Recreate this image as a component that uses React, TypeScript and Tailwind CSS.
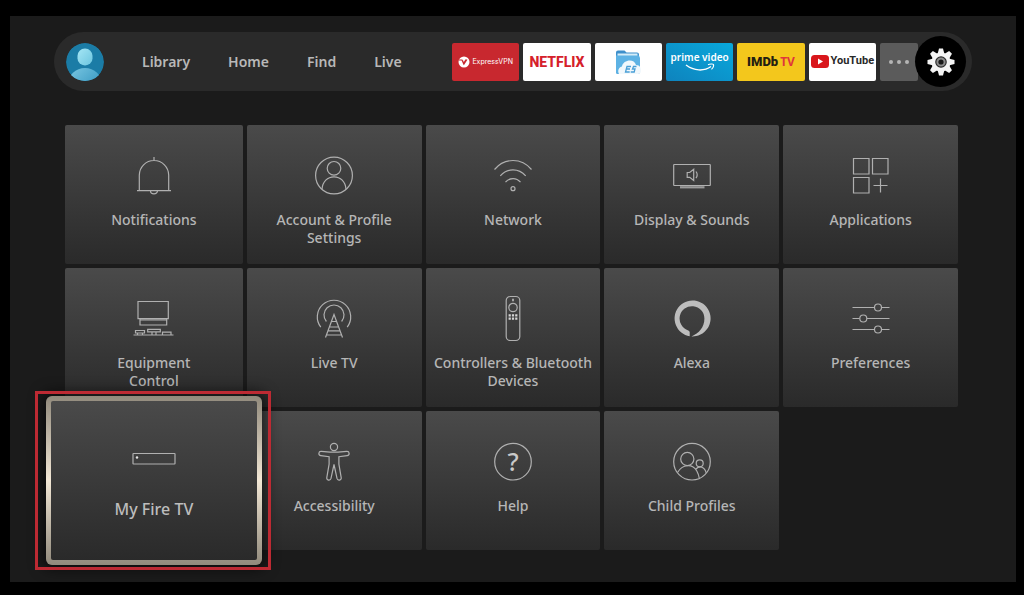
import type { ReactNode } from "react";

type Tile = { label: string; icon: ReactNode; focused?: boolean };

function Icon({ children }: { children: ReactNode }) {
  return (
    <svg
      aria-hidden="true"
      viewBox="0 0 48 48"
      className="size-12 shrink-0"
      fill="none"
      stroke="#b0b0b0"
      strokeWidth="1.2"
    >
      {children}
    </svg>
  );
}

const tiles: Tile[] = [
  {
    label: "Notifications",
    icon: (
      <Icon>
        <path d="M24 6v3.5M9.3 39.7V24.2a14.7 14.7 0 0 1 29.4 0v15.5M7 39.7h34M20.5 40a3.5 2.8 0 0 0 7 0" />
      </Icon>
    ),
  },
  {
    label: "Account & Profile Settings",
    icon: (
      <Icon>
        <circle cx="24" cy="24.5" r="18.4" />
        <circle cx="24" cy="17.3" r="6.8" />
        <path d="M12 38c.6-7.300 5.500-12.200 12-12.200s11.400 4.900 12 12.200" />
      </Icon>
    ),
  },
  {
    label: "Network",
    icon: (
      <Icon>
        <path d="M5.500 18.500C15.500 6.500 32.500 6.500 42.500 18.500M11.300 24.800c7-8 18.400-8 25.400 0M16.500 31.200c4-4.800 11-4.800 15 0" />
        <circle cx="24" cy="37.7" r="2" />
      </Icon>
    ),
  },
  {
    label: "Display & Sounds",
    icon: (
      <Icon>
        <rect x="5.700" y="13.500" width="36.600" height="21" rx="0.500" />
        <path d="M12 36.300h24.500" strokeWidth="2.200" stroke="#9a9a9a" />
        <path d="M19.200 21.500v4.800h2.500l4 3.200V18.300l-4 3.200zM28 20.500q2.400 3.300 0 6.700" />
      </Icon>
    ),
  },
  {
    label: "Applications",
    icon: (
      <Icon>
        <path d="M6.500 7.500h15.500v15.500H6.500zM25.500 7.500H41v15.500H25.500zM6.500 26.500h15.500V42H6.500zM33.500 27.500v14M26.500 34.500h14" />
      </Icon>
    ),
  },
  {
    label: "Equipment Control",
    icon: (
      <Icon>
        <path d="M8 7.500h30.300v17.200H8zM10 26h26.700v5H10zM10 24.700V26M36.700 24.700V26" />
        <path d="M3.500 41h40M5.500 36.500h9v2.500h-9zM7.500 39v2M12.500 39v2M17.700 35.300h12.600v2.500H17.700zM22 38v3M26 38v3M32.500 38.200h8.500V41h-8.500z" />
      </Icon>
    ),
  },
  {
    label: "Live TV",
    icon: (
      <Icon>
        <path d="M10.800 33.200a16.700 16.700 0 1 1 26.400 0M16.400 27.500a10 10 0 1 1 15.200 0" />
        <path d="M15.500 43.500 24 20.500l8.500 23M22 27.500h4M20 33h8M18.500 36.800h11M17 41h14" />
      </Icon>
    ),
  },
  {
    label: "Controllers & Bluetooth Devices",
    icon: (
      <Icon>
        <rect x="17.200" y="2.500" width="13.600" height="44" rx="4" />
        <circle cx="24" cy="13.500" r="4.200" />
        <path d="M24 4.700v2.600" strokeWidth="1.800" />
        <path
          d="M19.600 21.300h2.200M22.900 21.300h2.200M26.200 21.300h2.200M19.600 24.700h2.200M22.900 24.700h2.200M26.200 24.700h2.200"
          strokeWidth="2.200"
          stroke="#d6d6d6"
        />
      </Icon>
    ),
  },
  {
    label: "Alexa",
    icon: (
      <Icon>
        <path
          d="M21.700 42.200A18 18 0 1 1 23.500 42.400C31 39.500 36.400 33.300 36.400 24.600A12.400 12.400 0 1 0 20.300 36.400Q21.700 36.900 21.700 38.300Z"
          fill="#bdbdbd"
          stroke="none"
        />
      </Icon>
    ),
  },
  {
    label: "Preferences",
    icon: (
      <Icon>
        <path d="M5.500 13.500h21.800M34.700 13.500h7.800M5.500 24.500h7M20 24.500h22.500M5.500 35.500h21.800M34.700 35.500h7.800" />
        <circle cx="31" cy="13.500" r="3.500" />
        <circle cx="16.300" cy="24.500" r="3.500" />
        <circle cx="31" cy="35.500" r="3.500" />
      </Icon>
    ),
  },
  {
    label: "My Fire TV",
    focused: true,
    icon: (
      <Icon>
        <rect x="3" y="18.500" width="42" height="10.500" rx="0.500" />
        <circle cx="7" cy="22.500" r="1.200" fill="#e5e5e5" stroke="none" />
      </Icon>
    ),
  },
  {
    label: "Accessibility",
    icon: (
      <Icon>
        <circle cx="24" cy="10" r="3.600" />
        <path d="M11.300 14.300 20 15.100h8l8.700-.8c3-.2 3.300 3.900.4 4.300l-8.200 1.100v7.500l2.300 13.500c.4 2.800-3.500 3.300-4.200.7L24 27.500l-3 13.900c-.7 2.600-4.600 2.100-4.200-.7l2.300-13.500v-7.500l-8.200-1.100c-2.900-.4-2.600-4.500.4-4.300z" />
      </Icon>
    ),
  },
  {
    label: "Help",
    icon: (
      <Icon>
        <circle cx="24" cy="24.700" r="18.300" />
        <text
          x="24"
          y="33.500"
          textAnchor="middle"
          fill="#c9c9c9"
          stroke="none"
          fontSize="25"
          fontFamily="'Noto Sans', sans-serif"
        >
          ?
        </text>
      </Icon>
    ),
  },
  {
    label: "Child Profiles",
    icon: (
      <Icon>
        <circle cx="24" cy="24.700" r="18.300" />
        <circle cx="19.300" cy="22" r="6.600" />
        <circle cx="31.700" cy="26.300" r="3.500" />
        <path d="M9.500 35.500c5-8.500 15-9 19.300-1.500 1.300 2.300 2 4.300 2.500 7.300M28 32c3.500-3.700 8.500-2.200 10.200 3.800" />
      </Icon>
    ),
  },
];

const tileFill = "bg-linear-to-b from-[#4a4a4a] via-[#3a3a3a] to-[#2a2a2a]";

function SettingsTile({ label, icon, focused }: Tile) {
  if (focused) {
    return (
      <div className="relative z-10">
        <button
          type="button"
          className="absolute -inset-x-[19px] -inset-y-[15px] rounded-md bg-linear-to-b from-[#918a7c] via-[#f3e8d6] to-[#918a7c] p-[5px] shadow-[0_0_14px_4px_rgba(0,0,0,0.6)]"
        >
          <span
            className={`flex h-full flex-col items-center gap-4 rounded-xs pt-[34px] text-base leading-5 font-medium text-[#bdbdbd] ${tileFill}`}
          >
            {icon}
            {label}
          </span>
        </button>
        <div className="pointer-events-none absolute -inset-y-5 -right-7 -left-[30px] border-[3px] border-[#bd2a33]" />
      </div>
    );
  }
  return (
    <button
      type="button"
      className={`flex flex-col items-center gap-3 rounded-xs px-1 pt-[26px] text-sm leading-[18px] font-medium text-[#b6b6b6] ${tileFill}`}
    >
      {icon}
      <span className={label === "Equipment Control" ? "max-w-24" : "max-w-41"}>{label}</span>
    </button>
  );
}

function AppLink({ name, className, children }: { name: string; className: string; children: ReactNode }) {
  return (
    <a
      href="#"
      aria-label={name}
      className={`flex h-[38px] min-w-0 flex-1 items-center justify-center rounded-xs whitespace-nowrap ${className}`}
    >
      {children}
    </a>
  );
}

function AppShortcuts() {
  return (
    <div className="ml-auto flex w-[466px] items-center gap-1">
      <AppLink name="ExpressVPN" className="gap-0.5 bg-[#c8282f] text-white">
        <svg aria-hidden="true" viewBox="0 0 12 12" className="size-3 shrink-0">
          <circle cx="6" cy="6" r="5.500" fill="#fff" />
          <path d="M1 4h3l1.500 3.500L8 3.500M4.500 4.500 6 8l3-4.500" stroke="#c8282f" strokeWidth="1.100" fill="none" />
        </svg>
        <span className="font-[Inter] text-[7px] leading-3">ExpressVPN</span>
      </AppLink>
      <AppLink name="Netflix" className="bg-white text-[#d5202a]">
        <span className="font-[Roboto] text-sm font-extrabold">NETFLIX</span>
      </AppLink>
      <AppLink name="ES File Explorer" className="bg-white">
        <svg aria-hidden="true" viewBox="0 0 26 24" className="h-6 w-[26px]">
          <path d="M1 2.500Q1 .5 3 .5h6.500l2 2H22q2 0 2 2V22q0 2-2 2H3q-2 0-2-2z" fill="#3d8fcb" />
          <path d="M2.500 3.500h20v3h-20z" fill="#d4ecf8" />
          <path d="M1 5.500h23L25 8v14q0 2-2 2H3q-2 0-2-2z" fill="#5db2e4" />
          <path d="M4 24c-2-4 .5-7 3-7.500C8 10 19 8 21 15c4 0 5 3 5 6 0 2-1.500 3-3 3z" fill="#f1f8fc" />
          <path d="M16 16.500h-4l-1.500 5.500h4.200M11.500 19h3.500M21.500 16.500h-3l-1 2.500h2.500l-.800 3h-3.500" stroke="#4a9fd6" strokeWidth="1.300" fill="none" />
        </svg>
      </AppLink>
      <AppLink name="Prime Video" className="flex-col bg-linear-to-tr from-[#0e83bd] to-[#08a8dc] text-white">
        <span className="text-[10px] leading-3 font-semibold">prime video</span>
        <svg aria-hidden="true" viewBox="0 0 30 9" className="h-[9px] w-[30px]">
          <path d="M1 2c8 6 18 6.500 25 1.500" stroke="#fff" strokeWidth="1.500" fill="none" />
          <path d="M23 1.800c2-1 5-1 5.500-.3.300 1-.6 3.500-2 4.800" stroke="#fff" strokeWidth="1.100" fill="none" />
        </svg>
      </AppLink>
      <AppLink name="IMDb TV" className="items-baseline gap-0.5 bg-[#f3c71c] leading-[38px]">
        <span className="font-[Roboto] text-[13px] font-black text-[#231f12]">IMDb</span>
        <span className="font-['Noto_Sans'] text-xs leading-[38px] font-bold text-[#e0353c]">TV</span>
      </AppLink>
      <AppLink name="YouTube" className="gap-0.5 bg-white text-[#282828]">
        <svg aria-hidden="true" viewBox="0 0 18 13" className="h-[13px] w-[18px] shrink-0">
          <rect width="18" height="13" rx="3.500" fill="#d9161c" />
          <path d="M7 3.500v6l5-3z" fill="#fff" />
        </svg>
        <span className="font-[Roboto] text-[11px] font-bold">YouTube</span>
      </AppLink>
      <button
        type="button"
        aria-label="More apps"
        className="flex h-[38px] w-[38px] items-center justify-center gap-1 rounded-xs bg-[#5b5b5b]"
      >
        <span className="size-1 rounded-full bg-[#b5b5b5]" />
        <span className="size-1 rounded-full bg-[#b5b5b5]" />
        <span className="size-1 rounded-full bg-[#b5b5b5]" />
      </button>
    </div>
  );
}

function Gear() {
  return (
    <svg aria-hidden="true" viewBox="0 0 28 28" className="size-7">
      {[0, 45, 90, 135].map((angle) => (
        <path
          key={angle}
          d="M12 .5h4l1.300 5v17l-1.300 5h-4l-1.300-5v-17z"
          fill="#f4f4f4"
          transform={`rotate(${angle} 14 14)`}
        />
      ))}
      <circle cx="14" cy="14" r="9.500" fill="#f4f4f4" />
      <circle cx="14" cy="14" r="5.200" fill="#8b8b8b" stroke="#2c2c2c" strokeWidth="1.200" />
      <circle cx="14" cy="14" r="2.600" fill="#181818" />
    </svg>
  );
}

export default function App() {
  return (
    <div className="flex min-h-screen flex-col bg-black pt-4 pr-2 pb-3.5 pl-2.5 font-['Noto_Sans',sans-serif]">
      <main className="flex-1 bg-[#1b1b1b] pt-4 pb-8">
        <header className="mx-11 flex h-[59px] items-center rounded-full bg-[#2a2a2a] pr-1.5 pl-3">
          <button type="button" aria-label="Profile" className="shrink-0">
            <svg aria-hidden="true" viewBox="0 0 38 38" className="size-[38px]">
              <defs>
                <clipPath id="avatar-clip">
                  <circle cx="19" cy="19" r="19" />
                </clipPath>
                <linearGradient id="avatar-body" x1="0" y1="0" x2="1" y2="1">
                  <stop offset="0" stopColor="#7cc8e3" />
                  <stop offset="1" stopColor="#1e86b4" />
                </linearGradient>
                <linearGradient id="avatar-head" x1="0" y1="0" x2="1" y2="1">
                  <stop offset="0" stopColor="#a5e6f5" />
                  <stop offset="1" stopColor="#6cc5df" />
                </linearGradient>
              </defs>
              <g clipPath="url(#avatar-clip)">
                <circle cx="19" cy="19" r="19" fill="#1b7ca6" />
                <ellipse cx="19" cy="41" rx="17" ry="16" fill="url(#avatar-body)" />
                <rect x="11.500" y="5.500" width="15" height="17" rx="7.300" fill="url(#avatar-head)" />
              </g>
            </svg>
          </button>
          <nav className="ml-[38px] flex gap-[38px] text-sm leading-5 font-semibold text-[#b8b8b8]">
            <a href="#">Library</a>
            <a href="#">Home</a>
            <a href="#">Find</a>
            <a href="#">Live</a>
          </nav>
          <AppShortcuts />
          <button
            type="button"
            aria-label="Settings"
            className="z-10 -ml-[3px] flex size-[51px] shrink-0 items-center justify-center rounded-full bg-black"
          >
            <Gear />
          </button>
        </header>
        <section
          aria-label="Settings"
          className="mt-[34px] mr-[58px] ml-[55px] grid auto-rows-[139px] grid-cols-[178fr_175fr_175fr_175fr_175fr] gap-1"
        >
          {tiles.map((tile) => (
            <SettingsTile key={tile.label} {...tile} />
          ))}
        </section>
      </main>
    </div>
  );
}
